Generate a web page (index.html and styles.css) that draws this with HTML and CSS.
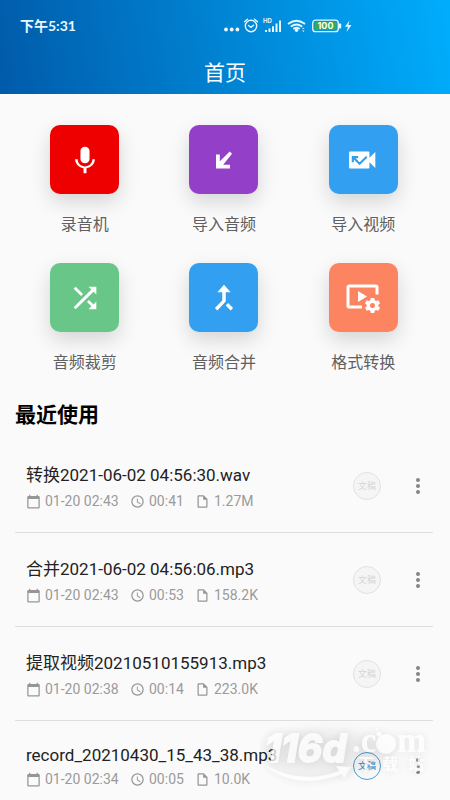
FILE: index.html
```html
<!DOCTYPE html>
<html lang="zh-CN">
<head>
<meta charset="utf-8">
<meta name="viewport" content="width=device-width, initial-scale=1">
<title>首页</title>
<link rel="stylesheet" href="styles.css">
</head>
<body>
<svg class="defs" aria-hidden="true">
  <symbol id="calendar" viewBox="0 0 24 24"><path d="M20 3h-1V1h-2v2H7V1H5v2H4c-1.100 0-2 .9-2 2v16c0 1.100.9 2 2 2h16c1.100 0 2-.9 2-2V5c0-1.100-.9-2-2-2zm0 18H4V8h16v13z"/></symbol>
  <symbol id="clock" viewBox="0 0 24 24"><path d="M12 2a10 10 0 1 0 0 20 10 10 0 0 0 0-20zm0 18a8 8 0 1 1 0-16 8 8 0 0 1 0 16zm.5-13H11v6l5.200 3.200.8-1.300-4.500-2.700z"/></symbol>
  <symbol id="file" viewBox="0 0 24 24"><path d="M14 2H6c-1.100 0-2 .9-2 2v16c0 1.100.9 2 2 2h12c1.100 0 2-.9 2-2V8l-6-6zM6 20V4h7v5h5v11H6z"/></symbol>
  <symbol id="more" viewBox="0 0 24 24"><circle cx="12" cy="6" r="2"/><circle cx="12" cy="12" r="2"/><circle cx="12" cy="18" r="2"/></symbol>
</svg>
<header class="top">
  <div class="status">
    <span class="time">下午5:31</span>
    <svg class="signals" viewBox="0 0 132 20" aria-hidden="true">
      <g fill="#e9f7ff">
        <circle cx="3" cy="13.500" r="1.900"/><circle cx="8.700" cy="13.500" r="1.900"/><circle cx="14.400" cy="13.500" r="1.900"/>
        <path d="M42 14h2v2h-2zM45.500 12.500h2V16h-2zM49 10.200h2V16h-2zM52.500 7.500h2V16h-2zM56 4.500h2V16h-2z"/>
        <circle cx="73.500" cy="14.300" r="1.700"/>
        <path d="M79 13l1.300-1.300 1.300 1.300zM79 14.500l1.300 1.500 1.300-1.500z"/>
        <path d="M116 7.500h1.200q1 0 1 1v3q0 1-1 1H116z"/>
        <path d="M126.500 4.500l-4.500 6.300h3l-1.500 5.200 5-7h-3.200z"/>
      </g>
      <g fill="none" stroke="#e9f7ff" stroke-width="1.400" stroke-linecap="round">
        <circle cx="28" cy="10" r="5.700"/><path d="M25.500 9.500l2.500 1.800 2.500-2M21.500 5.700l3-2.500M34.500 5.700l-3-2.500"/>
        <path stroke-width="1.900" d="M65.700 7.600q7.800-5.800 15.600 0M68.400 10.300q5.100-3.500 10.200 0M71 12.500q2.500-1.500 5 0"/>
      </g>
      <rect x="89.700" y="4.200" width="25.600" height="11.500" rx="3" fill="none" stroke="#e9f7ff" stroke-width="1.300"/>
      <rect x="91.500" y="6" width="22" height="8" rx="1.500" fill="#39a94b"/>
      <text class="battery" x="102.500" y="13.200" text-anchor="middle">100</text>
      <text class="hd" x="40" y="7">HD</text>
    </svg>
  </div>
  <h1>首页</h1>
</header>
<main>
  <nav class="tools">
    <a class="tool" href="#recorder"><span class="tile red"><svg viewBox="0 0 24 24"><path d="M12 14.500c1.900 0 3.400-1.300 3.400-3V5c0-1.700-1.500-3-3.400-3S8.600 3.300 8.600 5v6.500c0 1.700 1.500 3 3.400 3zm5.500-3c0 3.200-2.600 5.300-5.500 5.300s-5.500-2.100-5.500-5.300H4.600c0 3.400 2.900 6.300 6.300 6.700V22h2.200v-3.800c3.400-.4 6.300-3.300 6.300-6.700z"/></svg></span>录音机</a>
    <a class="tool" href="#import-audio"><span class="tile purple"><svg viewBox="0 0 24 24"><path d="M20 5.700l-2.300-2.200L7.800 13.300V6.500H4v14h14v-3.800h-6.800z"/></svg></span>导入音频</a>
    <a class="tool" href="#import-video"><span class="tile blue"><svg class="wide" viewBox="0 0 28 24"><path d="M2 4h17q1 0 1 1v5l5.500-5.500v15L20 14v5q0 1-1 1H2q-1 0-1-1V5q0-1 1-1z"/><path class="cut" d="M4.500 14V9.300h5M4.800 9.500l6 6L17.500 9"/></svg></span>导入视频</a>
    <a class="tool" href="#trim"><span class="tile green"><svg class="large" viewBox="0 0 24 24"><path d="M10.600 9.200L5.400 4 4 5.400l5.200 5.200zM14.500 4l2 2L4 18.600 5.400 20 18 7.500l2 2V4zm.3 9.400l-1.400 1.400 3.100 3.100-2 2.100H20v-5.500l-2 2z"/></svg></span>音频裁剪</a>
    <a class="tool" href="#merge"><span class="tile blue"><svg viewBox="0 0 24 24"><path d="M17 21.300l1.800-1.800-3.700-3.700-1.800 1.800zM7 7.700h3.700v6.100L5.200 19.500 7 21.300l6.300-6.600v-7H17L12 2z"/></svg></span>音频合并</a>
    <a class="tool" href="#convert"><span class="tile orange"><svg class="broad" viewBox="0 0 36 30"><path class="line" d="M32 11.500V4.300q0-1.300-1.300-1.300H4.300Q3 3 3 4.300v18.400Q3 24 4.300 24H17"/><path d="M13 8v11l9-5.500z"/><g transform="translate(27.500 22.500)"><path fill-rule="evenodd" d="M-1.700-7.500h3.400l.5 2.300 1.400.8 2.200-.8 1.700 3-1.700 1.500v1.400l1.700 1.500-1.700 3-2.200-.8-1.400.8-.5 2.300h-3.400l-.5-2.300-1.400-.8-2.200.8-1.700-3 1.700-1.500V-.7l-1.700-1.500 1.700-3 2.200.8 1.400-.8zM0-2.500a2.500 2.500 0 1 0 0 5 2.500 2.500 0 0 0 0-5z"/></g></svg></span>格式转换</a>
  </nav>
  <section class="recent">
    <h2>最近使用</h2>
    <ul>
      <li>
        <div class="info"><h3>转换2021-06-02 04:56:30.wav</h3>
        <p><svg><use href="#calendar"/></svg><span class="date">01-20 02:43</span><svg><use href="#clock"/></svg><span class="length">00:41</span><svg><use href="#file"/></svg><span>1.27M</span></p></div>
        <button class="script">文稿</button><button class="more" aria-label="更多"><svg><use href="#more"/></svg></button>
      </li>
      <li>
        <div class="info"><h3>合并2021-06-02 04:56:06.mp3</h3>
        <p><svg><use href="#calendar"/></svg><span class="date">01-20 02:43</span><svg><use href="#clock"/></svg><span class="length">00:53</span><svg><use href="#file"/></svg><span>158.2K</span></p></div>
        <button class="script">文稿</button><button class="more" aria-label="更多"><svg><use href="#more"/></svg></button>
      </li>
      <li>
        <div class="info"><h3>提取视频20210510155913.mp3</h3>
        <p><svg><use href="#calendar"/></svg><span class="date">01-20 02:38</span><svg><use href="#clock"/></svg><span class="length">00:14</span><svg><use href="#file"/></svg><span>223.0K</span></p></div>
        <button class="script">文稿</button><button class="more" aria-label="更多"><svg><use href="#more"/></svg></button>
      </li>
      <li>
        <div class="info"><h3 class="latin">record_20210430_15_43_38.mp3</h3>
        <p><svg><use href="#calendar"/></svg><span class="date">01-20 02:34</span><svg><use href="#clock"/></svg><span class="length">00:05</span><svg><use href="#file"/></svg><span>10.0K</span></p></div>
        <button class="script ready">文稿</button><button class="more" aria-label="更多"><svg><use href="#more"/></svg></button>
      </li>
    </ul>
  </section>
</main>
<svg class="mark" viewBox="0 0 190 80">
  <ellipse class="haze" cx="65" cy="32" rx="65" ry="22"/>
  <g class="ink">
    <path d="M3 44q38 22 76 7l-3-5 15 1-7 11-2-4Q36 72 3 44z"/>
    <text class="brand" x="5" y="42">116d</text>
    <text class="com" x="92" y="32">.c</text>
    <text class="com" x="137" y="32">m</text>
    <circle cx="126" cy="24" r="10"/><circle cx="119" cy="14" r="2.500"/><circle cx="114" cy="18" r="1.500"/><circle cx="117" cy="9" r="1.200"/>
    <text class="site" x="98" y="50">下</text><text class="site" x="122" y="50">载</text><text class="site" x="148" y="50">站</text>
  </g>
</svg>
</body>
</html>
```
FILE: styles.css
```css
* { box-sizing: border-box; }
html { background: #fafafa; }
body {
  margin: 0;
  position: relative;
  height: 100vh;
  overflow: hidden;
  background: #fafafa;
  color: #222;
  font-family: Roboto, "Noto Sans CJK SC", sans-serif;
}
h1, h2, h3, p, ul { margin: 0; padding: 0; font-weight: 400; }
ul { list-style: none; }
button { border: 0; padding: 0; background: none; font: inherit; }
.defs { position: absolute; width: 0; height: 0; }

.top {
  padding: 16px 0 6px;
  background: linear-gradient(80deg, #005baa, #00adfd);
  color: #fff;
}
.status {
  display: flex;
  align-items: center;
  justify-content: space-between;
  height: 20px;
  padding: 0 95px 0 20px;
}
.time { font: 700 14px/20px Lato, "Noto Sans CJK SC", sans-serif; color: #e9f7ff; }
.signals { width: 132px; height: 20px; overflow: visible; }
.battery { font: 700 9px Inter, sans-serif; fill: #fff; }
.hd { font: 700 6px Inter, sans-serif; fill: #e9f7ff; }
.top h1 { margin-top: 22px; font-size: 21px; line-height: 30px; text-align: center; }

.tools {
  display: grid;
  grid-template-columns: repeat(3, 1fr);
  row-gap: 27px;
  padding: 31px 17px 0 15px;
}
.tool {
  display: flex;
  flex-direction: column;
  align-items: center;
  gap: 20px;
  color: #606060;
  font-size: 16px;
  line-height: 22px;
  text-decoration: none;
}
.tile {
  display: grid;
  place-items: center;
  width: 69px;
  height: 69px;
  border-radius: 10px;
  box-shadow: 0 8px 20px rgba(0, 0, 0, .15);
}
.tile svg { width: 32px; height: 32px; fill: #fff; }
.tile svg.wide { width: 30px; height: 26px; }
.tile svg.large { width: 34px; height: 34px; }
.tile svg.broad { width: 36px; height: 30px; }
.red { background: #ee0000; }
.purple { background: #933fc8; }
.tile.purple svg { width: 24px; height: 24px; }
.blue { background: #339ff0; }
.green { background: #68c788; }
.orange { background: #fd8461; }
.tile .cut { fill: none; stroke: #339ff0; stroke-width: 2; }
.tile .line { fill: none; stroke: #fff; stroke-width: 3; }

.recent { padding: 26px 17px 0 15px; }
.recent h2 { color: #000; font-size: 21px; font-weight: 700; line-height: 30px; }
.recent ul { padding-top: 9px; }
.recent li {
  display: flex;
  align-items: center;
  padding: 23px 0 23px 11px;
  border-bottom: 1px solid #dedede;
}
.info { flex: 1; min-width: 0; }
h3 { font-size: 17px; line-height: 26px; white-space: nowrap; }
h3.latin { line-height: 22px; }
.info p {
  display: flex;
  align-items: center;
  margin-top: 5px;
  color: #9b9b9b;
  font-size: 14px;
  line-height: 16px;
}
.info p svg { width: 15px; height: 15px; margin-right: 4px; fill: #969696; }
.date { width: 85px; }
.length { width: 46px; }
.script {
  width: 28px;
  height: 28px;
  border: 1px solid #e2e2e2;
  border-radius: 50%;
  background: #f5f5f5;
  color: #d5d5d5;
  font-size: 9px;
  line-height: 26px;
}
.script.ready { border-color: #4b9ed4; background: #fafafa; color: #2789cc; }
.more { width: 24px; height: 24px; margin: 0 3px 0 25px; }
.more svg { display: block; width: 24px; height: 24px; fill: #858585; }

.mark {
  position: absolute;
  right: 0;
  bottom: 0;
  width: 190px;
  height: 80px;
  pointer-events: none;
}
.haze { fill: #000; opacity: .06; filter: blur(7px); }
.ink { fill: #fff; opacity: .75; filter: drop-shadow(0 0 4px rgba(0, 0, 0, .12)); }
.brand { font: italic 700 38px Inter, sans-serif; stroke: #fff; stroke-width: 2; }
.com { font: 700 35px "Liberation Serif", serif; }
.site { font: 700 16px "Noto Sans CJK SC", sans-serif; }
```
